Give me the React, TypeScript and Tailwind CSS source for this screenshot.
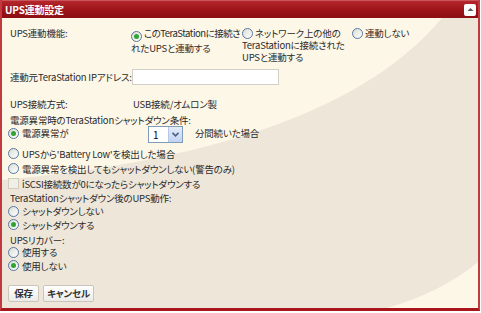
import React from "react";

const font = "font-['Noto_Sans_CJK_JP','Noto_Sans',sans-serif] [font-feature-settings:'palt']";

function Radio({ checked }: { checked?: boolean }) {
  return (
    <span className="inline-flex shrink-0 items-center justify-center w-[11px] h-[11px] rounded-full border border-[#56789e] bg-gradient-to-br from-[#dcdcd6] to-white align-[-2px]">
      {checked && <span className="w-[5px] h-[5px] rounded-full bg-[#2fa52f]" />}
    </span>
  );
}

function Opt({ checked, children }: { checked?: boolean; children: React.ReactNode }) {
  return (
    <div className="flex items-center gap-[3px] whitespace-nowrap">
      <Radio checked={checked} />
      <span>{children}</span>
    </div>
  );
}

export default function App() {
  return (
    <div className={`relative w-[481px] h-[313px] bg-white overflow-hidden ${font} text-[9.5px] tracking-[-0.2px] text-[#2a2a2a]`}>
      <div className="relative w-[480px] h-[311px] border-l-2 border-r-2 border-b-[3px] border-[#c23a3f] border-b-[#a8161c] bg-[#fdf7e8] flex flex-col">
        <svg className="absolute left-0 top-[18px] w-[476px] h-[290px]" viewBox="0 18 476 290" preserveAspectRatio="none">
          <path d="M440 18 Q330 150 0 180 L0 308 L385 308 Q440 292 476 262 L476 18 Z" fill="#ede6d9" />
        </svg>
        {/* header */}
        <div className="relative h-[18px] bg-gradient-to-b from-[#b4262c] via-[#9e1419] to-[#8c0e13] border-t border-[#c9545a] flex items-center justify-between pl-[3px] pr-[2px]">
          <span className="text-white font-bold text-[10px] leading-none">UPS連動設定</span>
          <span className="w-[12px] h-[12px] rounded-[2px] bg-white flex items-center justify-center">
            <svg width="7" height="5" viewBox="0 0 7 5"><path d="M0.5 4 L3.5 1 L6.5 4 Z" fill="#5a5a5a" /></svg>
          </span>
        </div>
        <div className="relative flex flex-col pl-[6px] leading-[12px] whitespace-nowrap">
          {/* row 1 */}
          <div className="flex mt-[9px] h-[36px]">
            <div className="w-[123px] pl-[2px]">UPS連動機能:</div>
            <div className="w-[111px]">
              <Radio checked /> <span className="tracking-[-0.5px]">このTeraStationに接続さ</span>
              <br />
              れたUPSと連動する
            </div>
            <div className="w-[110px]">
              <Radio /> <span>ネットワーク上の他の</span>
              <br />
              TeraStationに接続された
              <br />
              UPSと連動する
            </div>
            <div>
              <Radio /> <span>連動しない</span>
            </div>
          </div>
          {/* IP */}
          <div className="flex items-center mt-[6px] h-[16px]">
            <div className="w-[124px] pl-[2px]">連動元TeraStation IPアドレス:</div>
            <div className="w-[147px] h-[16px] bg-white border border-[#d2cfc6]" />
          </div>
          {/* connection */}
          <div className="flex items-center mt-[12px] h-[14px]">
            <div className="w-[125px] pl-[2px]">UPS接続方式:</div>
            <div>USB接続/オムロン製</div>
          </div>
          <div className="flex items-center mt-[3px] h-[12px] pl-[2px]">電源異常時のTeraStationシャットダウン条件:</div>
          <div className="flex items-start h-[17px]">
            <div className="w-[140px] pt-[1px]">
              <Opt checked>電源異常が</Opt>
            </div>
            <div className="w-[35px] h-[17px] bg-white border border-[#7f9db9] flex items-center">
              <span className="flex-1 pl-[4px] text-[10px] text-black">1</span>
              <span className="w-[14px] h-[15px] bg-gradient-to-b from-[#e4ecfb] to-[#c2d3f2] border-l border-[#b6c8ea] flex items-center justify-center">
                <svg width="7" height="5" viewBox="0 0 7 5"><path d="M0.5 0.8 L3.5 3.8 L6.5 0.8" stroke="#4d6185" strokeWidth="1.6" fill="none" /></svg>
              </span>
            </div>
            <div className="ml-[12px] pt-[1px]">分間続いた場合</div>
          </div>
          <div className="flex items-center mt-[3px] h-[15px]">
            <Opt>UPSから'Battery Low'を検出した場合</Opt>
          </div>
          <div className="flex items-center h-[15px]">
            <Opt>電源異常を検出してもシャットダウンしない(警告のみ)</Opt>
          </div>
          <div className="flex items-center h-[15px] gap-[3px]">
            <span className="w-[11px] h-[11px] border border-[#cfccc0] bg-[#f2efe6]" />
            <span>iSCSI接続数が0になったらシャットダウンする</span>
          </div>
          <div className="flex items-center h-[14px] pl-[2px]">TeraStationシャットダウン後のUPS動作:</div>
          <div className="flex items-center h-[12px]">
            <Opt>シャットダウンしない</Opt>
          </div>
          <div className="flex items-center h-[15px]">
            <Opt checked>シャットダウンする</Opt>
          </div>
          <div className="flex items-center mt-[2px] h-[12px] pl-[2px]">UPSリカバー:</div>
          <div className="flex items-center h-[12px]">
            <Opt>使用する</Opt>
          </div>
          <div className="flex items-center h-[15px]">
            <Opt checked>使用しない</Opt>
          </div>
          <div className="flex gap-[4px] mt-[12px]">
            <button className="w-[31px] h-[17px] rounded-[2px] border border-[#c9c6bd] bg-gradient-to-b from-white to-[#ecebe6] text-[9.5px] font-bold leading-none text-[#333]">保存</button>
            <button className="w-[51px] h-[17px] rounded-[2px] border border-[#c9c6bd] bg-gradient-to-b from-white to-[#ecebe6] text-[9.5px] font-bold leading-none text-[#333]">キャンセル</button>
          </div>
        </div>
      </div>
    </div>
  );
}
